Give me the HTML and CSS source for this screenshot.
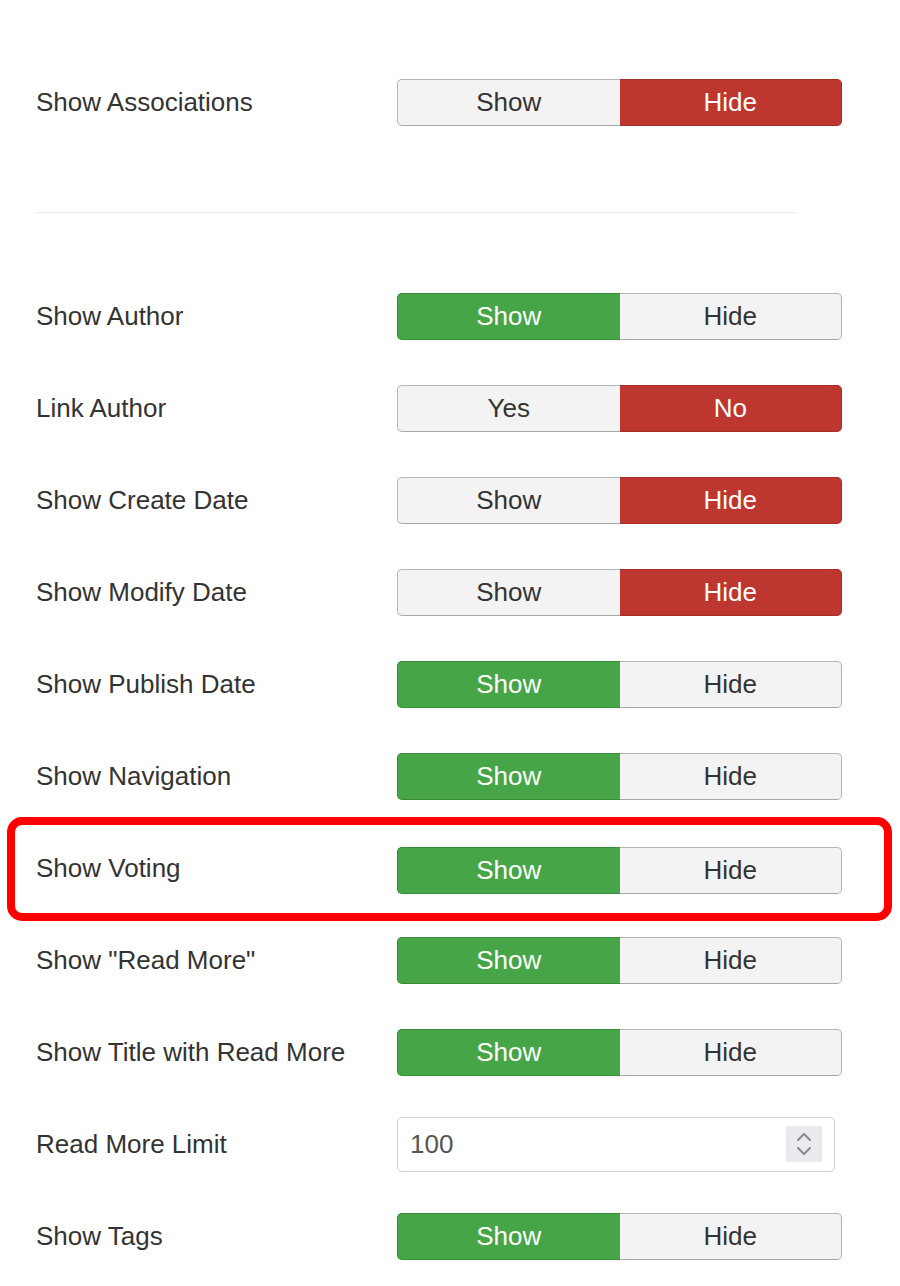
FILE: index.html
```html
<!DOCTYPE html>
<html>
<head>
<meta charset="utf-8">
<link rel="stylesheet" href="styles.css">
</head>
<body>
<div class="form">
  <div class="row">
    <div class="label">Show Associations</div>
    <div class="toggle"><span class="opt">Show</span><span class="opt on-red">Hide</span></div>
  </div>
  <hr class="sep">
  <div class="row">
    <div class="label">Show Author</div>
    <div class="toggle"><span class="opt on-green">Show</span><span class="opt">Hide</span></div>
  </div>
  <div class="row">
    <div class="label">Link Author</div>
    <div class="toggle"><span class="opt">Yes</span><span class="opt on-red">No</span></div>
  </div>
  <div class="row">
    <div class="label">Show Create Date</div>
    <div class="toggle"><span class="opt">Show</span><span class="opt on-red">Hide</span></div>
  </div>
  <div class="row">
    <div class="label">Show Modify Date</div>
    <div class="toggle"><span class="opt">Show</span><span class="opt on-red">Hide</span></div>
  </div>
  <div class="row">
    <div class="label">Show Publish Date</div>
    <div class="toggle"><span class="opt on-green">Show</span><span class="opt">Hide</span></div>
  </div>
  <div class="row">
    <div class="label">Show Navigation</div>
    <div class="toggle"><span class="opt on-green">Show</span><span class="opt">Hide</span></div>
  </div>
  <div class="row highlight">
    <div class="label">Show Voting</div>
    <div class="toggle"><span class="opt on-green">Show</span><span class="opt">Hide</span></div>
  </div>
  <div class="row">
    <div class="label">Show "Read More"</div>
    <div class="toggle"><span class="opt on-green">Show</span><span class="opt">Hide</span></div>
  </div>
  <div class="row">
    <div class="label">Show Title with Read More</div>
    <div class="toggle"><span class="opt on-green">Show</span><span class="opt">Hide</span></div>
  </div>
  <div class="row">
    <div class="label">Read More Limit</div>
    <div class="number">
      <span class="value">100</span>
      <span class="spin">
        <svg width="20" height="30" viewBox="0 0 20 30"><path d="M4 11 L10 5 L16 11" fill="none" stroke="#8a8a92" stroke-width="2" stroke-linecap="round" stroke-linejoin="round"/><path d="M4 19 L10 25 L16 19" fill="none" stroke="#8a8a92" stroke-width="2" stroke-linecap="round" stroke-linejoin="round"/></svg>
      </span>
    </div>
  </div>
  <div class="row">
    <div class="label">Show Tags</div>
    <div class="toggle"><span class="opt on-green">Show</span><span class="opt">Hide</span></div>
  </div>
</div>
</body>
</html>
```
FILE: styles.css
```css
* { box-sizing: border-box; }
html, body { margin: 0; padding: 0; background: #fff; }
body {
  font-family: "Liberation Sans", Arial, Helvetica, sans-serif;
  color: #333;
  font-size: 26px;
}
.form {
  padding-top: 56px;
  width: 900px;
}
.row {
  display: flex;
  align-items: center;
  height: 92px;
  padding-left: 36px;
}
.label {
  width: 361px;
  flex: none;
  color: #333;
}
.toggle {
  display: flex;
  width: 445px;
  height: 47px;
}
.opt {
  flex: 1;
  display: flex;
  align-items: center;
  justify-content: center;
  background: #f3f3f3;
  color: #333;
  border: 1px solid #b5b5b5;
  border-bottom-color: #a8a8a8;
}
.opt:first-child {
  border-radius: 5px 0 0 5px;
  border-right: none;
}
.opt:last-child {
  border-radius: 0 5px 5px 0;
  border-left: none;
}
.opt.on-red {
  background: #bd362f;
  color: #fff;
  border-color: #a52e28;
}
.opt.on-green {
  background: #46a546;
  color: #fff;
  border-color: #3a8c3a;
}
.sep {
  margin: 64px 0 57px 36px;
  width: 760px;
  border: none;
  border-top: 1px solid #e8e8e8;
  height: 0;
}
.highlight {
  position: relative;
}
.highlight .toggle {
  margin-top: 5px;
}
.highlight::after {
  content: "";
  position: absolute;
  left: 7px;
  right: 8px;
  top: -5px;
  bottom: -7px;
  border: 8px solid #ff0000;
  border-radius: 15px;
  pointer-events: none;
}
.number {
  display: flex;
  align-items: center;
  justify-content: space-between;
  width: 438px;
  height: 55px;
  border: 1px solid #cfcfcf;
  border-radius: 5px;
  padding: 0 12px 0 12px;
  color: #555;
}
.spin {
  display: flex;
  align-items: center;
  justify-content: center;
  width: 36px;
  height: 36px;
  background: #e9e9ee;
}
.spin svg { display: block; }
```
